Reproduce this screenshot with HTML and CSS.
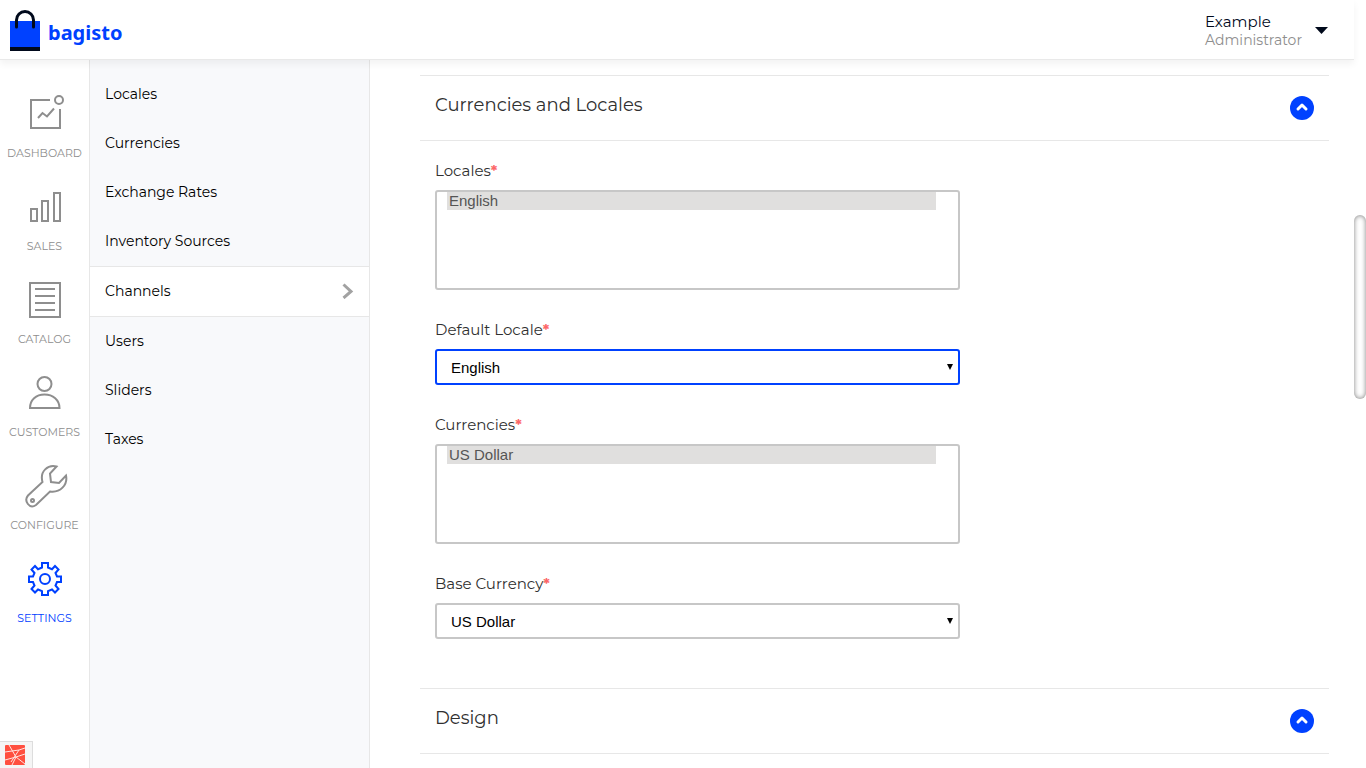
FILE: index.html
```html
<!DOCTYPE html>
<html lang="en">
<head>
<meta charset="utf-8">
<title>Edit Channel</title>
<link rel="stylesheet" href="styles.css">
</head>
<body>
<header class="topbar">
  <a class="brand" href="#">
    <svg width="30" height="42" viewBox="0 0 30 42" aria-hidden="true">
      <rect y="12" width="30" height="26" fill="#0041ff"/>
      <rect y="38" width="30" height="4" fill="#00091b"/>
      <path d="M6.500 18V11a8.500 8.500 0 0 1 17 0V18" fill="none" stroke="#00091b" stroke-width="3" stroke-linecap="round"/>
    </svg>
    <span class="brand-name">bagisto</span>
  </a>
  <button class="profile" type="button">
    <span class="profile-text">
      <span class="profile-name">Example</span>
      <span class="profile-role">Administrator</span>
    </span>
    <svg width="13" height="7" viewBox="0 0 13 7" aria-hidden="true"><path d="M0 0H13L6.500 7Z" fill="#00091b"/></svg>
  </button>
</header>
<div class="layout">
  <nav class="rail" aria-label="Main">
    <a class="rail-item" href="#">
      <svg class="rail-icon" viewBox="0 0 48 48"><path d="M29 12H10V40H39V21"/><circle cx="38" cy="12" r="4"/><path d="M17 30L21.500 25L26 28.500L33 20.500"/></svg>
      <span>DASHBOARD</span>
    </a>
    <a class="rail-item" href="#">
      <svg class="rail-icon" viewBox="0 0 48 48"><path d="M10 28H16V40H10ZM21 20H27V40H21ZM33 12H39V40H33Z"/></svg>
      <span>SALES</span>
    </a>
    <a class="rail-item" href="#">
      <svg class="rail-icon" viewBox="0 0 48 48"><path d="M9 9H39V43H9ZM14 15H34M14 22H34M14 29H34M14 36H34"/></svg>
      <span>CATALOG</span>
    </a>
    <a class="rail-item" href="#">
      <svg class="rail-icon" viewBox="0 0 48 48"><circle cx="23.500" cy="17" r="7"/><path d="M9 41C9 33 15 27.500 23.500 27.500S38.500 33 38.500 41Z"/></svg>
      <span>CUSTOMERS</span>
    </a>
    <a class="rail-item" href="#">
      <svg class="rail-icon" viewBox="0 0 48 48"><path d="M35.500 6.500C27 4.500 18.500 11 21.500 22L7 35.500C2.500 41 8.500 49.500 15 45L29 31.500C39 33 47 25 45 15.500L38 23L30 22L29 13.500Z"/><circle cx="11.500" cy="40.500" r="1.500"/></svg>
      <span>CONFIGURE</span>
    </a>
    <a class="rail-item rail-item-active" href="#">
      <svg class="rail-icon" viewBox="0 0 48 48"><path d="M21 10H27V14.500L31 16.200L34 13L37.500 16.500L34.500 20L36 23.500H40V29H36L34.500 32.500L37.500 36L34 39.500L31 36.500L27 38.200V42H21V38.200L17 36.500L14 39.500L10.500 36L13.500 32.500L12 29H8V23.500H12L13.500 20L10.500 16.500L14 13L17 16.200L21 14.500Z"/><circle cx="24" cy="26" r="5"/></svg>
      <span>SETTINGS</span>
    </a>
  </nav>
  <nav class="submenu" aria-label="Settings">
    <a class="submenu-item" href="#">Locales</a>
    <a class="submenu-item" href="#">Currencies</a>
    <a class="submenu-item" href="#">Exchange Rates</a>
    <a class="submenu-item" href="#">Inventory Sources</a>
    <a class="submenu-item submenu-item-active" href="#"><span>Channels</span>
      <svg width="12" height="16" viewBox="0 0 12 16" aria-hidden="true"><path d="M1.500 1.500L9 8.500L1.500 15" fill="none" stroke="#a2a2a2" stroke-width="3"/></svg>
    </a>
    <a class="submenu-item" href="#">Users</a>
    <a class="submenu-item" href="#">Sliders</a>
    <a class="submenu-item" href="#">Taxes</a>
  </nav>
  <main class="content">
    <section class="accordion">
      <div class="accordion-header">
        <h2>Currencies and Locales</h2>
        <button class="toggle" type="button" aria-label="Collapse Currencies and Locales">
          <svg width="24" height="24" viewBox="0 0 24 24"><path d="M8 13L12 9L16 13"/></svg>
        </button>
      </div>
      <div class="accordion-body">
        <div class="field">
          <label for="locales">Locales<span class="required">*</span></label>
          <select class="control control-list" id="locales" multiple>
            <option selected>English</option>
          </select>
        </div>
        <div class="field">
          <label for="default-locale">Default Locale<span class="required">*</span></label>
          <div class="select-wrap">
            <select class="control control-current" id="default-locale"><option>English</option></select>
            <svg class="arrow" width="6" height="6" viewBox="0 0 6 6" aria-hidden="true"><path d="M0 0H6L3 6Z"/></svg>
          </div>
        </div>
        <div class="field">
          <label for="currencies">Currencies<span class="required">*</span></label>
          <select class="control control-list" id="currencies" multiple>
            <option selected>US Dollar</option>
          </select>
        </div>
        <div class="field">
          <label for="base-currency">Base Currency<span class="required">*</span></label>
          <div class="select-wrap">
            <select class="control" id="base-currency"><option>US Dollar</option></select>
            <svg class="arrow" width="6" height="6" viewBox="0 0 6 6" aria-hidden="true"><path d="M0 0H6L3 6Z"/></svg>
          </div>
        </div>
      </div>
    </section>
    <section class="accordion">
      <div class="accordion-header">
        <h2>Design</h2>
        <button class="toggle" type="button" aria-label="Collapse Design">
          <svg width="24" height="24" viewBox="0 0 24 24"><path d="M8 13L12 9L16 13"/></svg>
        </button>
      </div>
    </section>
  </main>
</div>
<div class="scroll-thumb" aria-hidden="true"></div>
<button class="debugbar" type="button" aria-label="Open debug bar">
  <svg width="20" height="20" viewBox="0 0 20 20"><rect width="20" height="20" rx="1" fill="#ff4f3f"/><path d="M4 0L11 12L0 15M11 12L20 9M11 12L7 20M0 7L14 5L20 3M14 5L6 17M11 12L20 19" fill="none" stroke="#ffe3df" stroke-width="1"/></svg>
</button>
</body>
</html>
```
FILE: styles.css
```css
* {
  box-sizing: border-box;
}

body {
  margin: 0;
  height: 100vh;
  padding-right: 12px;
  display: flex;
  flex-direction: column;
  overflow: hidden;
  background: #fff;
  color: #303030;
  font-family: Montserrat, Inter, sans-serif;
  font-size: 15px;
}

a {
  color: inherit;
  text-decoration: none;
}

button {
  border: 0;
  padding: 0;
  background: none;
  font: inherit;
  cursor: pointer;
}

.topbar {
  position: relative;
  z-index: 1;
  flex: none;
  height: 60px;
  padding: 0 26px 0 10px;
  display: flex;
  align-items: center;
  justify-content: space-between;
  background: #fff;
  border-bottom: 1px solid #e9e9e9;
  box-shadow: 0 4px 7px rgba(0, 0, 0, 0.05);
}

.brand {
  display: flex;
  align-items: center;
  gap: 8px;
}

.brand-name {
  padding-top: 6px;
  color: #0041ff;
  font: bold 20px/24px "Noto Sans", sans-serif;
}

.profile {
  display: flex;
  align-items: center;
  gap: 13px;
  padding-top: 2px;
  text-align: left;
  line-height: 18px;
}

.profile-text {
  display: flex;
  flex-direction: column;
}

.profile-name {
  color: #00091b;
}

.profile-role {
  color: #8e8e8e;
  font-size: 14px;
}

.layout {
  flex: 1;
  min-height: 0;
  display: flex;
}

.rail {
  flex: none;
  width: 90px;
  padding-top: 28px;
  border-right: 1px solid #e7e7e7;
}

.rail-item {
  display: flex;
  flex-direction: column;
  align-items: center;
  height: 93px;
  color: #8e8e8e;
  font-size: 11px;
  line-height: 16px;
  gap: 9px;
}

.rail-icon {
  width: 48px;
  height: 48px;
  fill: none;
  stroke: #8e8e8e;
  stroke-width: 2;
}

.rail-item-active {
  color: #0041ff;
}

.rail-item-active .rail-icon {
  stroke: #0041ff;
}

.submenu {
  flex: none;
  width: 280px;
  padding-top: 10px;
  background: #f8f9fb;
  border-right: 1px solid #e7e7e7;
  color: #000;
  font-size: 14px;
}

.submenu-item {
  display: flex;
  align-items: center;
  justify-content: space-between;
  height: 49px;
  padding: 0 15px 2px;
}

.submenu-item-active {
  height: 51px;
  padding-bottom: 1px;
  background: #fff;
  border-top: 1px solid #e7e7e7;
  border-bottom: 1px solid #e7e7e7;
}

.content {
  flex: 1;
  min-width: 0;
  padding: 15px 25px 0 50px;
  overflow: hidden;
}

.accordion + .accordion {
  margin-top: -1px;
}

.accordion-header {
  height: 66px;
  padding: 0 15px;
  display: flex;
  align-items: center;
  justify-content: space-between;
  border-top: 1px solid #e7e7e7;
  border-bottom: 1px solid #e7e7e7;
}

.accordion-header h2 {
  margin: 0;
  padding-bottom: 7px;
  font-size: 18px;
  line-height: 22px;
  font-weight: 400;
}

.toggle {
  width: 24px;
  height: 24px;
  border-radius: 50%;
  background: #0041ff;
}

.toggle svg {
  display: block;
  fill: none;
  stroke: #fff;
  stroke-width: 3;
  stroke-linecap: round;
  stroke-linejoin: round;
}

.accordion-body {
  padding: 20px 15px;
}

.field {
  max-width: 525px;
  margin-bottom: 30px;
}

.field label {
  display: block;
  margin-bottom: 10px;
  line-height: 19px;
}

.required {
  color: #fc6868;
  font-weight: 700;
}

.control {
  display: block;
  appearance: none;
  width: 100%;
  height: 36px;
  margin: 0;
  padding: 0 14px;
  border: 2px solid #c7c7c7;
  border-radius: 3px;
  background: #fff;
  color: #000;
  font: 15px "Liberation Sans", Arial, sans-serif;
  outline: none;
}

.control-current {
  border-color: #0041ff;
}

.control-list {
  height: 100px;
  padding: 0 22px 0 10px;
}

.control-list option {
  min-height: 18px;
  padding: 0 2px;
  color: #555;
}

.control-list option:checked {
  background: #e0dfde linear-gradient(#e0dfde, #e0dfde);
  color: #555;
}

.select-wrap {
  position: relative;
}

.arrow {
  position: absolute;
  top: 15px;
  right: 7px;
  pointer-events: none;
}

.scroll-thumb {
  position: fixed;
  top: 28vh;
  right: 0;
  width: 12px;
  height: 24vh;
  border-radius: 6px;
  background: #fff;
  box-shadow: inset 0 0 5px rgba(0, 0, 0, 0.5);
}

.debugbar {
  position: fixed;
  z-index: 2;
  left: 0;
  bottom: 0;
  padding: 3px 7px 3px 5px;
  background: #f5f5f5;
  border-top: 1px solid #ddd;
  border-right: 1px solid #ddd;
}

.debugbar svg {
  display: block;
}
```
